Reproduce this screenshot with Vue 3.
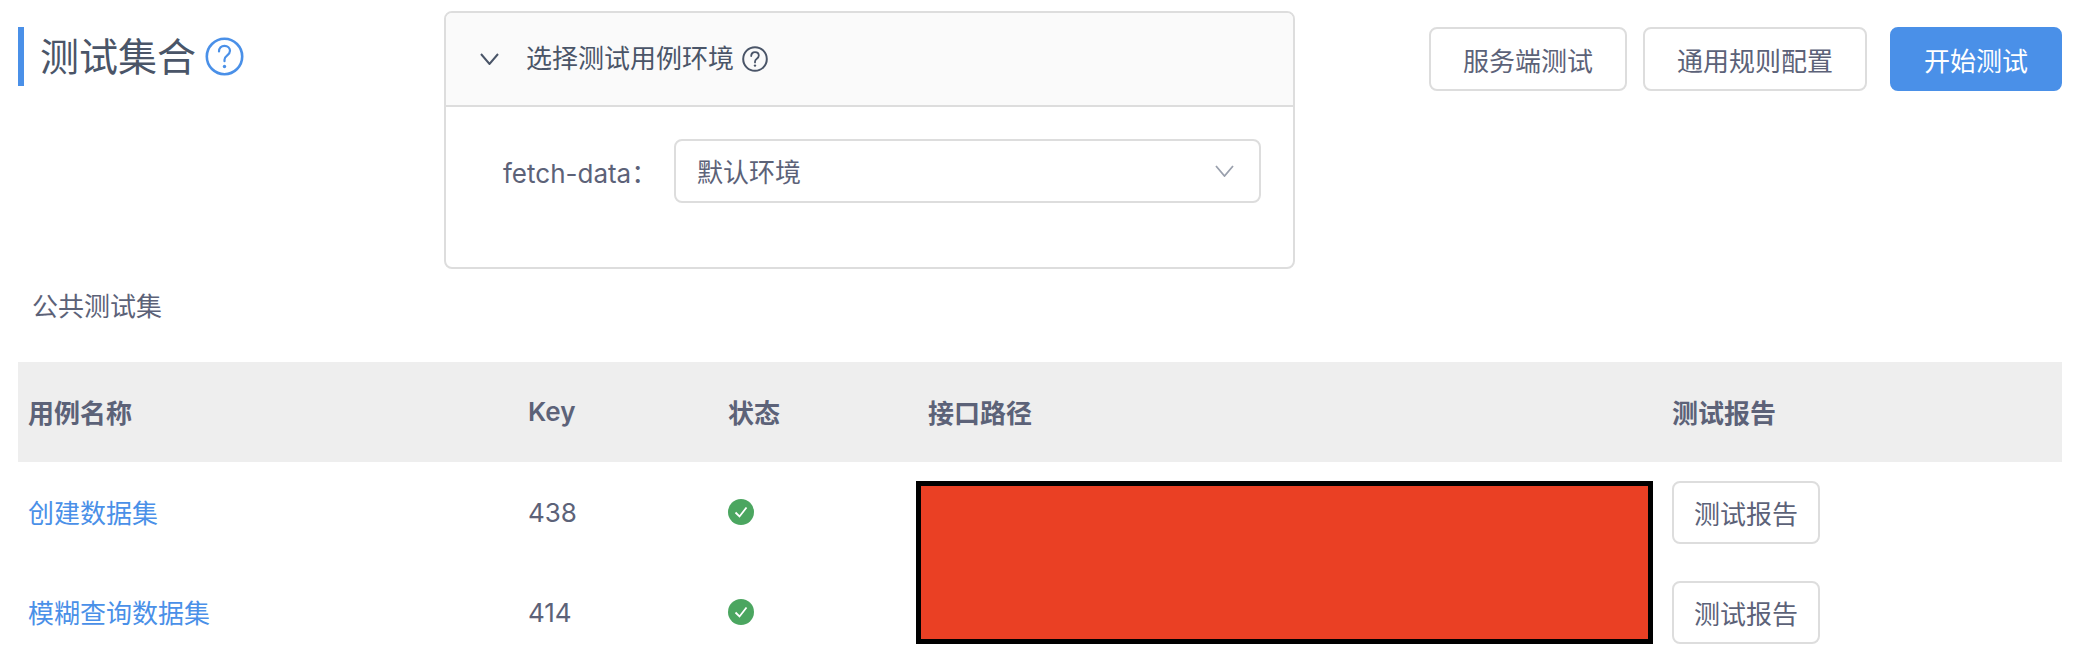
<template>
  <div class="page">
    <div class="top">
      <div class="title-wrap">
        <h1 class="title">测试集合</h1>
        <svg class="title-help" viewBox="0 0 39 39">
          <circle cx="19.5" cy="19.5" r="17.7" fill="none" stroke="#4a90e8" stroke-width="2.6" />
          <path d="M14 14.5c0-3.4 2.4-5.7 5.5-5.7s5.5 2.1 5.5 5c0 2.3-1.3 3.5-3 4.8-1.6 1.2-2.5 2.2-2.5 4.2v1.4" fill="none" stroke="#4a90e8" stroke-width="2.2" stroke-linecap="round" />
          <circle cx="19.5" cy="29.5" r="1.7" fill="#4a90e8" />
        </svg>
      </div>

      <div class="env-card">
        <div class="env-head">
          <svg class="chevron" viewBox="0 0 19 12">
            <path d="M1 1l8.5 10L18 1" fill="none" stroke="#4a5568" stroke-width="2" />
          </svg>
          <span class="env-title">选择测试用例环境</span>
          <svg class="env-help" viewBox="0 0 26 26">
            <circle cx="13" cy="13" r="11.8" fill="none" stroke="#4a5568" stroke-width="2" />
            <path d="M9.2 10c0-2.3 1.6-3.8 3.8-3.8s3.8 1.4 3.8 3.4c0 1.6-.9 2.4-2 3.2-1.1.8-1.8 1.5-1.8 2.9v.7" fill="none" stroke="#4a5568" stroke-width="1.8" stroke-linecap="round" />
            <circle cx="13" cy="19.6" r="1.2" fill="#4a5568" />
          </svg>
        </div>
        <div class="env-body">
          <label class="env-label">fetch-data：</label>
          <div class="select">
            <span class="select-text">默认环境</span>
            <svg class="select-arrow" viewBox="0 0 19 12">
              <path d="M1 1l8.5 10L18 1" fill="none" stroke="#9aa0ad" stroke-width="1.8" />
            </svg>
          </div>
        </div>
      </div>

      <div class="actions">
        <button class="btn server">服务端测试</button>
        <button class="btn rules">通用规则配置</button>
        <button class="btn primary">开始测试</button>
      </div>
    </div>

    <div class="section-label">公共测试集</div>

    <div class="table">
      <div class="row head">
        <div class="cell">用例名称</div>
        <div class="cell">Key</div>
        <div class="cell">状态</div>
        <div class="cell">接口路径</div>
        <div class="cell">测试报告</div>
      </div>
      <div class="row" v-for="item in cases" :key="item.key">
        <div class="cell"><a class="case-link">{{ item.name }}</a></div>
        <div class="cell">{{ item.key }}</div>
        <div class="cell">
          <svg class="ok" viewBox="0 0 26 26">
            <circle cx="13" cy="13" r="13" fill="#4ba660" />
            <path d="M7.5 13.5l4 4 7-9" fill="none" stroke="#fff" stroke-width="1.8" />
          </svg>
        </div>
        <div class="cell"></div>
        <div class="cell"><button class="btn report">测试报告</button></div>
      </div>
      <!-- 接口路径被打码 -->
      <div class="redact"></div>
    </div>
  </div>
</template>

<script setup>
const cases = [
  { name: '创建数据集', key: 438 },
  { name: '模糊查询数据集', key: 414 },
]
</script>

<style>
html,
body {
  margin: 0;
  background: #fff;
}
</style>

<style scoped>
.page {
  width: 2088px;
  height: 672px;
  box-sizing: border-box;
  padding: 11px 26px 0 18px;
  overflow: hidden;
  font-family: Inter, "Noto Sans CJK SC", sans-serif;
  font-size: 26px;
  color: #5c6278;
}

.top {
  display: flex;
  align-items: flex-start;
}

.title-wrap {
  width: 426px;
  height: 59px;
  margin-top: 16px;
  box-sizing: border-box;
  border-left: 6px solid #4a90e8;
  padding-left: 16px;
  display: flex;
  align-items: center;
  gap: 9px;
}

.title {
  margin: 0;
  font-size: 39px;
  font-weight: 400;
  line-height: 59px;
  color: #4a5568;
}

.title-help {
  width: 39px;
  height: 39px;
}

.env-card {
  width: 851px;
  box-sizing: border-box;
  border: 2px solid #dddddd;
  border-radius: 8px;
  overflow: hidden;
}

.env-head {
  height: 94px;
  box-sizing: border-box;
  padding-left: 34px;
  background: #fafafa;
  border-bottom: 2px solid #dddddd;
  display: flex;
  align-items: center;
  color: #4a5568;
}

.chevron {
  width: 19px;
  height: 12px;
  margin-right: 27px;
}

.env-title {
  line-height: 26px;
}

.env-help {
  width: 26px;
  height: 26px;
  margin-left: 8px;
}

.env-body {
  padding: 32px 32px 64px 57px;
  display: flex;
  align-items: center;
}

.env-label {
  width: 171px;
  flex: none;
}

.select {
  flex: 1;
  height: 64px;
  box-sizing: border-box;
  border: 2px solid #dddddd;
  border-radius: 8px;
  padding: 0 25px 0 21px;
  display: flex;
  align-items: center;
  justify-content: space-between;
}

.select-text {
  padding-bottom: 2px;
}

.select-arrow {
  width: 19px;
  height: 12px;
}

.actions {
  margin-top: 16px;
  margin-left: auto;
  display: flex;
}

.btn {
  height: 64px;
  box-sizing: border-box;
  border: 2px solid #dddddd;
  border-radius: 8px;
  background: #fff;
  padding: 0;
  font: inherit;
  color: #5c6278;
}

.server {
  width: 198px;
  margin-right: 16px;
}

.rules {
  width: 224px;
  margin-right: 23px;
}

.primary {
  width: 172px;
  border-color: #4a90e8;
  background: #4a90e8;
  color: #fff;
}

.section-label {
  padding-left: 14px;
  line-height: 76px;
  margin-bottom: 17px;
}

.table {
  position: relative;
}

.row {
  height: 100px;
  display: grid;
  grid-template-columns: 500px 200px 200px 744px 400px;
  align-items: center;
}

.row.head {
  background: #eeeeee;
  font-weight: 600;
}

.row.head .cell {
  padding-bottom: 1px;
}

.cell {
  padding-left: 10px;
  display: flex;
  align-items: center;
}

.case-link {
  color: #4a90e8;
  padding-bottom: 2px;
}

.ok {
  width: 26px;
  height: 26px;
}

.report {
  width: 148px;
  height: 63px;
}

.redact {
  position: absolute;
  left: 898px;
  top: 119px;
  width: 737px;
  height: 163px;
  box-sizing: border-box;
  border: 5px solid #000;
  background: #ea4024;
}
</style>
